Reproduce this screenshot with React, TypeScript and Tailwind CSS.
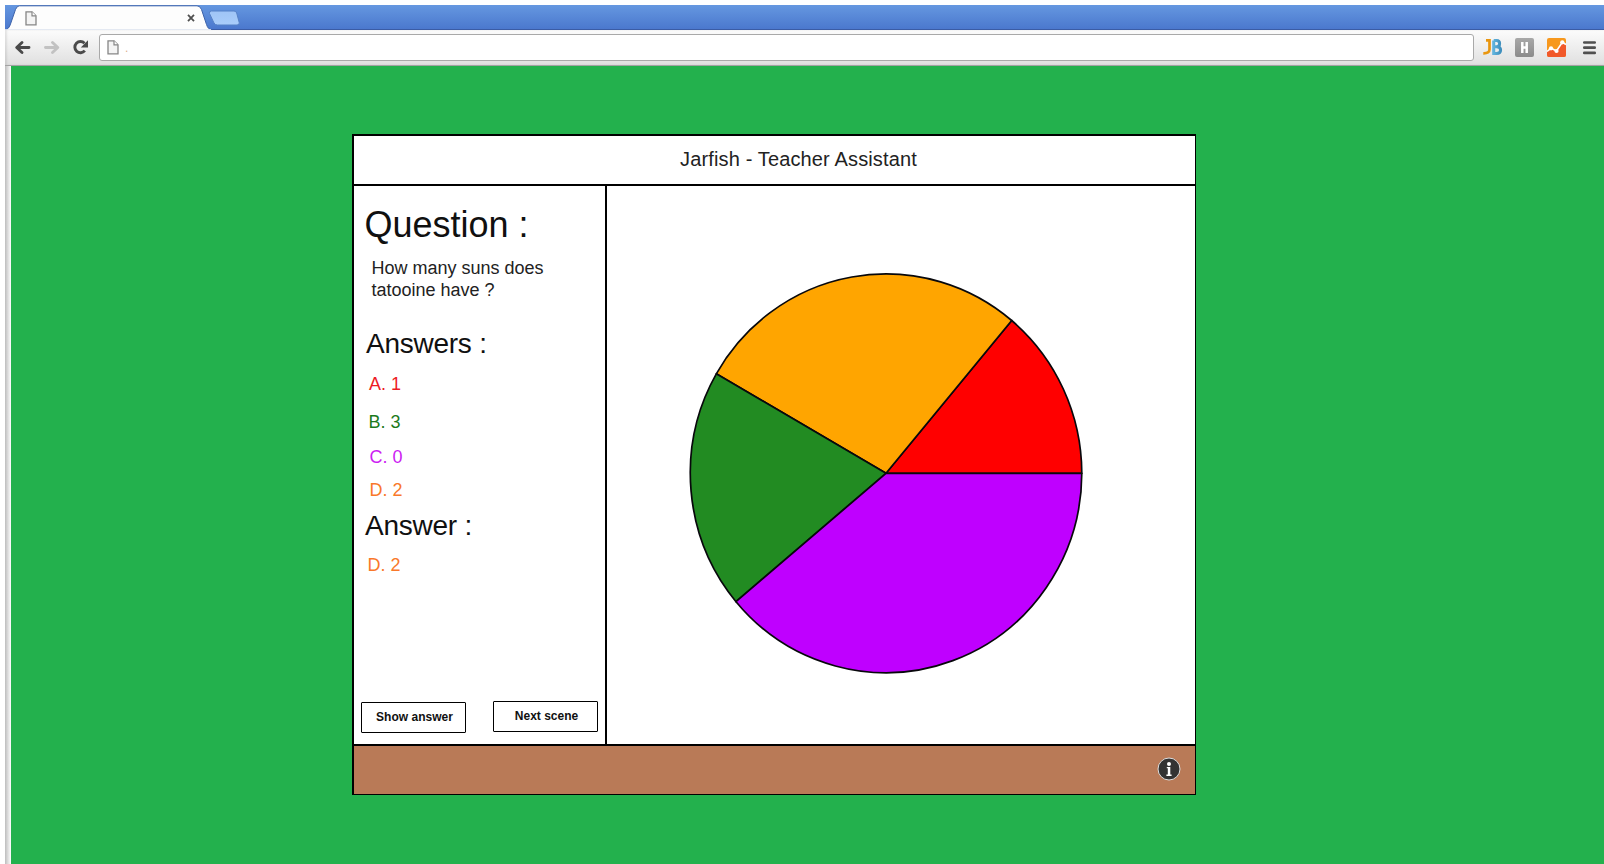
import React from "react";

function PageIcon({ className = "" }: { className?: string }) {
  return (
    <svg width="12" height="15" viewBox="0 0 12 15" className={className}>
      <path d="M1 .8h6l4 4v9H1z" fill="#f4f4f4" stroke="#868686" strokeWidth="1.300" />
      <path d="M7 .8v4h4" fill="#fff" stroke="#868686" strokeWidth="1.200" />
    </svg>
  );
}

function TabStrip() {
  return (
    <div className="relative h-[25px] w-full bg-linear-to-b from-[#6597e0] to-[#4a77cd] shadow-[inset_0_-1px_0_#3b5ca5]">
      <svg width="240" height="25" viewBox="0 0 240 25" className="block">
        <defs>
          <linearGradient id="newtab" x1="0" y1="0" x2="0" y2="1">
            <stop offset="0" stopColor="#9fc4f6" />
            <stop offset="1" stopColor="#a9cdfa" />
          </linearGradient>
        </defs>
        <path
          d="M0 25C3 24.500 4.500 22 5.500 19L10.500 4.500Q12 .8 14.500 .8H192Q195 .8 196.500 4.500L201.500 19.500Q203 24.500 207 25Z"
          fill="#fdfdfd"
          stroke="#3d62a9"
          strokeWidth="1"
        />
        <path d="M0 25H206" stroke="#fdfdfd" strokeWidth="1.500" />
        <path
          d="M206.500 6H229Q231 6 231.700 8L234.200 17.500Q234.800 20 232 20H212.500Q210 20 209 18L204.500 8.500Q203.800 6 206.500 6Z"
          fill="url(#newtab)"
          stroke="#5580c6"
          strokeWidth="1"
        />
        <path d="M183 9.800L189 16.200M189 9.800L183 16.200" stroke="#505050" strokeWidth="1.800" />
      </svg>
      <PageIcon className="absolute left-5 top-[6px]" />
    </div>
  );
}

function Toolbar() {
  return (
    <div className="flex h-9 items-center border-b border-[#a3a3a3] bg-linear-to-b from-[#fcfcfc] to-[#e0e0e0] shadow-[inset_2px_0_2px_#00000018]">
      <svg width="94" height="35" viewBox="0 0 94 35" className="shrink-0" fill="none" strokeLinecap="round" strokeLinejoin="round">
        <path d="M24 17.500H12.500M17 12.500L11.700 17.500L17 22.500" stroke="#4a4a4a" strokeWidth="2.900" />
        <path d="M40.500 17.500H52M47.500 12.500L52.800 17.500L47.500 22.500" stroke="#c2c2c2" strokeWidth="2.900" />
        <path d="M79.500 13.300A5.600 5.600 0 1 0 79.800 20.700" stroke="#4a4a4a" strokeWidth="2.900" strokeLinecap="butt" />
        <path d="M83 10.300V17.500H75.800Z" fill="#4a4a4a" />
      </svg>
      <div className="flex h-[27px] grow items-center rounded-[3px] border border-[#a9a9a9] bg-white pl-[7px]">
        <PageIcon />
        <span className="ml-[6px] font-['Liberation_Sans'] text-[12px] leading-[18px] text-[#dcae90]">.</span>
      </div>
      <svg width="130" height="35" viewBox="0 0 130 35" className="shrink-0">
        <defs>
          <linearGradient id="hbox" x1="0" y1="0" x2="0" y2="1">
            <stop offset="0" stopColor="#a8a8a8" />
            <stop offset="1" stopColor="#8b8b8b" />
          </linearGradient>
          <linearGradient id="blue" x1="0" y1="0" x2="1" y2="0">
            <stop offset="0" stopColor="#5fb2dc" />
            <stop offset="1" stopColor="#3f8fbd" />
          </linearGradient>
        </defs>
        <path d="M12 10.300H15.500V19.500Q15.500 23.500 9.300 23.300" stroke="#e9960f" strokeWidth="2.700" fill="none" />
        <path
          d="M19.700 10.400V23.600H22.500Q26.600 23.600 26.600 20Q26.600 16.700 22.500 16.700H20M22.500 16.700Q25.600 16.700 25.600 13.500Q25.600 10.400 22.500 10.400H19.700"
          stroke="url(#blue)"
          strokeWidth="3"
          fill="none"
        />
        <rect x="41" y="8" width="19" height="19" rx="2" fill="url(#hbox)" />
        <path d="M48.300 12V23M52.700 12V23M48 17.500H53" stroke="#fff" strokeWidth="2.500" />
        <rect x="73" y="8" width="19" height="19" rx="2" fill="#f7981d" />
        <path d="M73 21.500L77 18.300L82.500 21L88.300 12.300L92 14.500V25Q92 27 90 27H75Q73 27 73 25Z" fill="#f1592a" />
        <path d="M73 21.500L77 18.300L82.500 21L88.300 12.300L92 14.500" stroke="#fff" strokeWidth="1.600" fill="none" />
        <g fill="#fff">
          <circle cx="77" cy="18.300" r="2.100" />
          <circle cx="82.500" cy="21" r="2.100" />
          <circle cx="88.300" cy="12.300" r="2.100" />
        </g>
        <path d="M110.300 12.500H120.700M110.300 17.700H120.700M110.300 22.900H120.700" stroke="#505050" strokeWidth="2.700" strokeLinecap="round" />
      </svg>
    </div>
  );
}

const answers = [
  { label: "A. 1", className: "mt-[14px] pl-[15px] text-[#ed1c24]" },
  { label: "B. 3", className: "mt-[18px] pl-[14.5px] text-[#1c7a1c]" },
  { label: "C. 0", className: "mt-[15px] pl-[15.5px] text-[#cc1cf2]" },
  { label: "D. 2", className: "mt-[13px] pl-[15.5px] text-[#f9782a]" },
];

function QuestionPanel() {
  return (
    <section className="flex w-[253px] shrink-0 flex-col border-r-2 border-black pt-[19px] text-[#101010]">
      <h1 className="pl-[10.5px] text-[36px] leading-[40px]">Question :</h1>
      <p className="mt-[12px] pl-[17.5px] text-[18px] leading-[22px] text-[#222]">
        How many suns does
        <br />
        tatooine have ?
      </p>
      <h2 className="mt-[27px] pl-[12px] text-[28px] leading-[32px] tracking-[-0.25px]">Answers :</h2>
      <ul>
        {answers.map((a) => (
          <li key={a.label} className={`text-[18px] leading-[20px] ${a.className}`}>
            {a.label}
          </li>
        ))}
      </ul>
      <h2 className="mt-[10px] pl-[11px] text-[28px] leading-[32px] tracking-[-0.25px]">Answer :</h2>
      <p className="mt-[13px] pl-[13.5px] text-[18px] leading-[20px] text-[#f9782a]">D. 2</p>
      <div className="mt-auto flex items-end justify-between pb-[11px] pl-[7px] pr-[7px] text-[12px] font-bold leading-[14px]">
        <button className="h-[31px] w-[105px] rounded-[1px] border border-black bg-white pb-px pl-[2px] tracking-[0.03px]">
          Show answer
        </button>
        <button className="mb-px h-[31px] w-[105px] rounded-[1px] border border-black bg-white pb-px pl-[2px]">Next scene</button>
      </div>
    </section>
  );
}

function PieChart() {
  return (
    <svg width="588" height="558" viewBox="607 186 588 558" className="block shrink-0">
      <g stroke="#08080c" strokeWidth="1.700" strokeLinejoin="round">
        <path d="M886 473.300H1081.800A196 200 0 0 0 1011.700 320.500Z" fill="#ff0000" />
        <path d="M886 473.300L1011.700 320.500A196 200 0 0 0 716.300 373.800Z" fill="#ffa500" />
        <path d="M886 473.300L716.300 373.800A196 200 0 0 0 736 601.700Z" fill="#228b22" />
        <path d="M886 473.300L736 601.700A196 200 0 0 0 1081.800 473.300Z" fill="#bf00ff" />
      </g>
    </svg>
  );
}

function InfoIcon() {
  return (
    <svg width="24" height="24" viewBox="0 0 24 24">
      <circle cx="12" cy="12" r="11" fill="#333" stroke="#ddd" strokeWidth="1" />
      <circle cx="12" cy="7" r="2" fill="#fff" />
      <path d="M9.800 10H13.300V17.500H14.600V19H9.400V17.500H10.800V11.300H9.800Z" fill="#fff" />
    </svg>
  );
}

export default function App() {
  return (
    <div className="flex h-[864px] w-[1604px] flex-col overflow-hidden bg-white pl-[5px] pt-[5px] font-['Liberation_Sans',Arial,sans-serif]">
      <TabStrip />
      <Toolbar />
      <div className="flex grow">
        <div className="w-[6px] shrink-0 bg-linear-to-r from-[#bdbdbd] to-white" />
        <main className="grow bg-[#23b14d] pl-[341px] pt-[68px]">
          <div className="flex h-[661px] w-[844px] flex-col border-2 border-b border-r border-black bg-white">
            <header className="flex h-[50px] shrink-0 justify-center border-b-2 border-black pl-[48px] pt-[11px] text-[20px] leading-[24px] tracking-[0.14px] text-[#222]">
              Jarfish - Teacher Assistant
            </header>
            <div className="flex h-[558px] shrink-0">
              <QuestionPanel />
              <PieChart />
            </div>
            <footer className="flex grow items-center justify-end border-t-2 border-black bg-[#b97a57] pb-[2px] pr-[14px]">
              <InfoIcon />
            </footer>
          </div>
        </main>
      </div>
    </div>
  );
}
